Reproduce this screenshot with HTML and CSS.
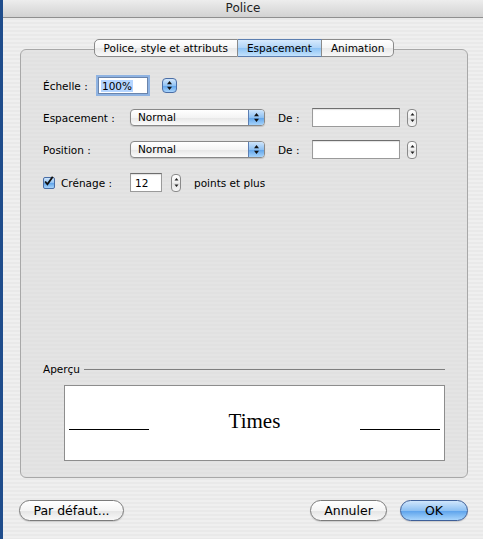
FILE: index.html
```html
<!DOCTYPE html>
<html lang="fr">
<head>
    <meta charset="UTF-8">
    <title>Police</title>
    <link rel="stylesheet" href="styles.css">
</head>
<body>
    <div class="window">
        <div class="titlebar">Police</div>

        <div class="body">
            <!-- onglets -->
            <div class="tabs">
                <span class="tab">Police, style et attributs</span>
                <span class="tab tab-active">Espacement</span>
                <span class="tab">Animation</span>
            </div>

            <div class="tabbox">
                <div class="row row-scale">
                    <span class="label label-scale">Échelle :</span>
                    <span class="field field-focus"><span class="sel">100%</span></span>
                    <span class="stepper-blue">
                        <svg width="5" height="9" viewBox="0 0 5 9"><path d="M2.5 0L5 3.2H0Z M2.5 9L5 5.8H0Z" fill="#111"/></svg>
                    </span>
                </div>

                <div class="row row-popup">
                    <span class="label label-wide">Espacement :</span>
                    <span class="popup">
                        <span class="popup-text">Normal</span>
                        <span class="popup-arrows">
                            <svg width="5" height="9" viewBox="0 0 5 9"><path d="M2.5 0L5 3.2H0Z M2.5 9L5 5.8H0Z" fill="#111"/></svg>
                        </span>
                    </span>
                    <span class="label label-de">De :</span>
                    <span class="field field-de"></span>
                    <span class="stepper">
                        <svg width="5" height="11" viewBox="0 0 5 11"><path d="M2.5 1L4.5 3.6H0.5Z M2.5 10L4.5 7.4H0.5Z" fill="#222"/></svg>
                    </span>
                </div>

                <div class="row row-popup">
                    <span class="label label-wide">Position :</span>
                    <span class="popup">
                        <span class="popup-text">Normal</span>
                        <span class="popup-arrows">
                            <svg width="5" height="9" viewBox="0 0 5 9"><path d="M2.5 0L5 3.2H0Z M2.5 9L5 5.8H0Z" fill="#111"/></svg>
                        </span>
                    </span>
                    <span class="label label-de">De :</span>
                    <span class="field field-de"></span>
                    <span class="stepper">
                        <svg width="5" height="11" viewBox="0 0 5 11"><path d="M2.5 1L4.5 3.6H0.5Z M2.5 10L4.5 7.4H0.5Z" fill="#222"/></svg>
                    </span>
                </div>

                <div class="row row-kern">
                    <span class="checkbox">
                        <svg width="13" height="13" viewBox="0 0 13 13"><path d="M2.5 6.5L5.2 9.8L11.5 0.8" fill="none" stroke="#111" stroke-width="2.2"/></svg>
                    </span>
                    <span class="label label-kern">Crénage :</span>
                    <span class="field field-kern">12</span>
                    <span class="stepper stepper-kern">
                        <svg width="5" height="11" viewBox="0 0 5 11"><path d="M2.5 1L4.5 3.6H0.5Z M2.5 10L4.5 7.4H0.5Z" fill="#222"/></svg>
                    </span>
                    <span class="label">points et plus</span>
                </div>

                <!-- aperçu -->
                <div class="preview-head">
                    <span class="label">Aperçu</span>
                    <span class="rule"></span>
                </div>
                <div class="preview">
                    <span class="preview-line"></span>
                    <span class="preview-text">Times</span>
                    <span class="preview-line"></span>
                </div>
            </div>

            <div class="buttons">
                <span class="btn btn-default">Par défaut...</span>
                <span class="btn btn-cancel">Annuler</span>
                <span class="btn btn-ok">OK</span>
            </div>
        </div>
    </div>
</body>
</html>
```

FILE: styles.css
```css
/* base */
body {
    margin: 0;
    font-family: "DejaVu Sans", sans-serif;
    font-size: 10.5px;
    color: #000;
}

.window {
    display: flex;
    flex-direction: column;
    height: 539px;
    box-sizing: border-box;
    border-left: 3px solid #1f4d8c;
    background: repeating-linear-gradient(#efefef 0 2px, #e9e9e9 2px 4px);
}

/* title bar */
.titlebar {
    height: 17px;
    line-height: 17px;
    text-align: center;
    font-size: 12px;
    color: #222;
    background: linear-gradient(#ededed, #d2d2d2);
    border-bottom: 1px solid #8f8f8f;
}

.body {
    flex: 1;
    display: flex;
    flex-direction: column;
    padding: 0 15px 18px 17px;
}

/* tabs */
.tabs {
    display: flex;
    justify-content: center;
    margin-top: 21px;
    margin-bottom: -8px;
    position: relative;
    z-index: 1;
}

.tab {
    height: 16px;
    line-height: 16px;
    padding: 0 9px;
    border: 1px solid #8a8a8a;
    border-left: none;
    background: linear-gradient(#ffffff, #f5f5f5 50%, #e8e8e8 51%, #f8f8f8);
}

.tab:first-child {
    border-left: 1px solid #8a8a8a;
    border-radius: 5px 0 0 5px;
}

.tab:last-child {
    border-radius: 0 5px 5px 0;
}

.tab-active {
    background: linear-gradient(#d6eafd, #aed3f7 50%, #8cc2f4 51%, #c4e3fd);
    border-top-color: #5d7fb0;
    border-bottom-color: #5d7fb0;
}

.tabbox {
    flex: 1;
    display: flex;
    flex-direction: column;
    border: 1px solid #a8a8a8;
    border-radius: 6px;
    background: repeating-linear-gradient(#e4e4e4 0 2px, #e1e1e1 2px 4px);
    padding: 25px 22px 16px 22px;
}

/* rows */
.row {
    display: flex;
    align-items: center;
}

.row-scale {
    height: 21px;
}

.row-popup {
    height: 21px;
    margin-top: 11px;
}

.row-kern {
    height: 19px;
    margin-top: 13px;
}

.label {
    white-space: nowrap;
}

.label-scale {
    width: 55px;
}

.label-wide {
    width: 87px;
}

.label-de {
    width: 34px;
    margin-left: 13px;
}

.label-kern {
    width: 69px;
    margin-left: 6px;
}

/* fields */
.field {
    display: flex;
    align-items: center;
    box-sizing: border-box;
    height: 19px;
    background: #fff;
    border: 1px solid #9a9a9a;
    border-top-color: #6e6e6e;
    box-shadow: inset 0 1px 1px rgba(0, 0, 0, 0.12);
}

.field-focus {
    width: 50px;
    height: 17px;
    padding-left: 2px;
    border-color: #6a84ab;
    box-shadow: 0 0 0 2px #8fb3e2;
}

.sel {
    background: #b5d5ff;
    padding: 0 1px;
}

.field-de {
    width: 88px;
}

.field-kern {
    width: 32px;
    padding-left: 4px;
}

/* popups */
.popup {
    display: flex;
    width: 135px;
    height: 17px;
    box-sizing: border-box;
    border: 1px solid #888;
    border-radius: 4px;
    overflow: hidden;
    background: linear-gradient(#ffffff, #f4f4f4 50%, #e6e6e6 51%, #fbfbfb);
    box-shadow: 0 1px 1px rgba(0, 0, 0, 0.15);
}

.popup-text {
    flex: 1;
    padding-left: 7px;
    line-height: 15px;
}

.popup-arrows {
    width: 15px;
    display: flex;
    align-items: center;
    justify-content: center;
    border-left: 1px solid #5b7eb3;
    background: linear-gradient(#cfe5fb, #8fc1f2 50%, #5ea3ea 51%, #a6d3fa);
}

/* steppers */
.stepper {
    display: flex;
    align-items: center;
    justify-content: center;
    box-sizing: border-box;
    width: 10px;
    height: 18px;
    margin-left: 7px;
    border: 1px solid #8a8a8a;
    border-radius: 4px;
    background: linear-gradient(#ffffff, #eeeeee 50%, #e2e2e2 51%, #f7f7f7);
}

.stepper-kern {
    margin-left: 9px;
    margin-right: 13px;
}

.stepper-blue {
    display: flex;
    align-items: center;
    justify-content: center;
    box-sizing: border-box;
    width: 15px;
    height: 15px;
    margin-left: 14px;
    border: 1px solid #4b6ea6;
    border-radius: 4px;
    background: linear-gradient(#d2e7fc, #92c3f3 50%, #5ba1ea 51%, #a9d4fb);
}

.checkbox {
    display: flex;
    box-sizing: border-box;
    width: 12px;
    height: 12px;
    border: 1px solid #4a6ea6;
    border-radius: 2px;
    background: linear-gradient(#cfe5fb, #8fc1f2 50%, #5ea3ea 51%, #a6d3fa);
    overflow: visible;
}

.checkbox svg {
    margin: -3px 0 0 -1px;
}

/* aperçu */
.preview-head {
    display: flex;
    align-items: center;
    margin-top: auto;
}

.rule {
    flex: 1;
    height: 1px;
    margin-left: 4px;
    background: #7f7f7f;
}

.preview {
    display: flex;
    justify-content: space-between;
    align-items: flex-end;
    height: 76px;
    box-sizing: border-box;
    margin: 10px 0 0 21px;
    padding: 0 4px 30px 4px;
    background: #fff;
    border: 1px solid #8d8d8d;
}

.preview-line {
    width: 80px;
    height: 1px;
    background: #000;
}

.preview-text {
    font-family: "Liberation Serif", serif;
    font-size: 21px;
    line-height: 21px;
    margin-bottom: -2px;
}

/* boutons */
.buttons {
    display: flex;
    gap: 13px;
    margin: 22px 0 0 -1px;
}

.btn {
    box-sizing: border-box;
    height: 21px;
    line-height: 19px;
    text-align: center;
    font-size: 12.5px;
    border: 1px solid #7b7b7b;
    border-radius: 11px;
    background: linear-gradient(#ffffff, #f4f4f4 50%, #e4e4e4 51%, #f8f8f8);
    box-shadow: 0 1px 1px rgba(0, 0, 0, 0.15);
}

.btn-default {
    width: 105px;
}

.btn-cancel {
    width: 77px;
    margin-left: auto;
}

.btn-ok {
    width: 68px;
    border-color: #3e5f98;
    background: linear-gradient(#d0e6fc, #8ec1f3 50%, #5aa1eb 51%, #a8d5fc);
}
```
